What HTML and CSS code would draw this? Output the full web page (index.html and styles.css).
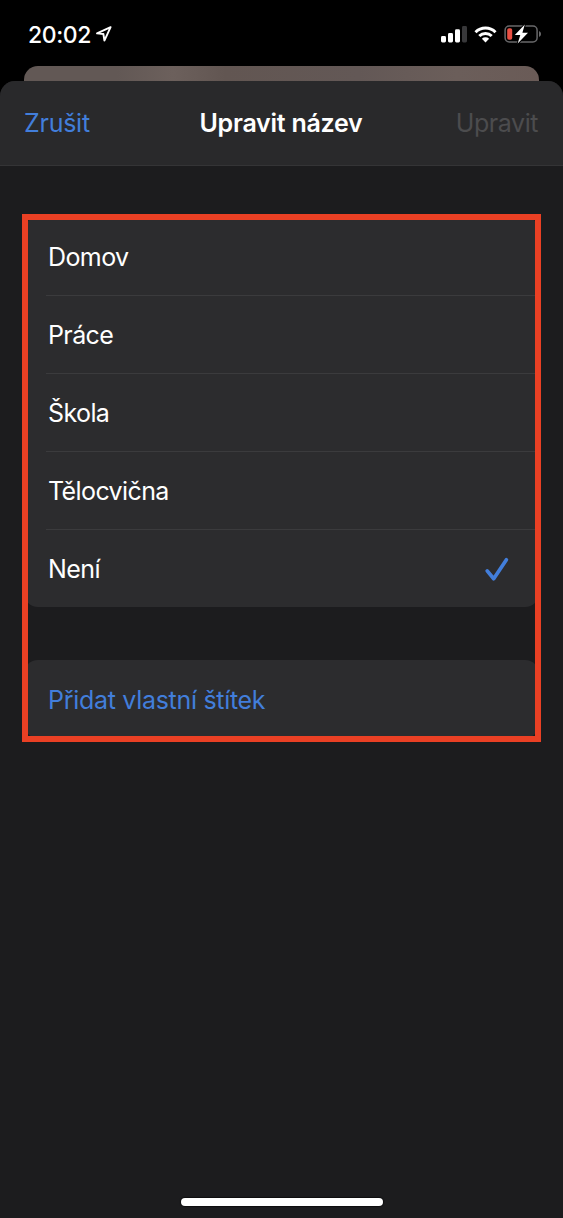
FILE: index.html
```html
<!DOCTYPE html>
<html lang="cs">
<head>
<meta charset="utf-8">
<title>Upravit název</title>
<link rel="stylesheet" href="styles.css">
</head>
<body>
<div class="phone">
  <header class="status">
    <div class="clock">
      <span class="time">20:02</span>
      <svg class="location" width="18" height="18" viewBox="0 0 18 18"><path d="M15.6 2.2 2 8.4 8.4 9 9.4 15.6Z"/></svg>
    </div>
    <div class="indicators">
      <svg class="signal" width="26" height="17" viewBox="0 0 26 17"><rect x="0" y="10" width="5" height="6.5" rx="1.4"/><rect x="7" y="7" width="5" height="9.5" rx="1.4"/><rect x="14" y="3.2" width="5" height="13.3" rx="1.4"/><rect class="off" x="21" y="0" width="5" height="16.5" rx="1.4"/></svg>
      <svg class="wifi" width="23" height="17" viewBox="0 0 23 17"><path class="arc" d="M1.5 6.2a14.2 14.2 0 0 1 20 0M5.3 10a8.8 8.8 0 0 1 12.4 0"/><path class="dot" d="M7.9 12.8a5.2 5.2 0 0 1 7.2 0L11.5 16.5Z"/></svg>
      <svg class="battery" width="38" height="20" viewBox="0 0 38 20"><rect class="shell" x="1.1" y="2.1" width="32" height="15.8" rx="4.2"/><path class="cap" d="M35 7a3.2 3.2 0 0 1 0 6Z"/><rect class="charge" x="3.2" y="4.2" width="5" height="11.6" rx="1.8"/><path class="bolt" d="M20.8.6 10.8 11h5.5l-2.6 8.5L24 8.8h-5.6Z"/></svg>
    </div>
  </header>
  <div class="backdrop"></div>
  <section class="sheet">
    <nav class="navbar">
      <span class="cancel">Zrušit</span>
      <h1 class="title">Upravit název</h1>
      <span class="submit">Upravit</span>
    </nav>
    <main class="content">
      <ul class="group">
        <li class="row"><span>Domov</span></li>
        <li class="row"><span>Práce</span></li>
        <li class="row"><span>Škola</span></li>
        <li class="row"><span>Tělocvična</span></li>
        <li class="row"><span>Není</span><svg class="check" width="26" height="26" viewBox="0 0 26 26"><path d="M3.2 14.9 9.7 22.7 22.4 3.7"/></svg></li>
      </ul>
      <ul class="group">
        <li class="row add"><span>Přidat vlastní štítek</span></li>
      </ul>
      <div class="highlight"></div>
    </main>
    <div class="home"></div>
  </section>
</div>
</body>
</html>
```
FILE: styles.css
```css
* { box-sizing: border-box; }
body { margin: 0; background: #000; }
.phone {
  width: 563px; height: 1218px; overflow: hidden;
  display: flex; flex-direction: column;
  background: #000; color: #fff;
  font: 400 25px/30px Inter, "Liberation Sans", sans-serif;
  letter-spacing: -.25px;
}
.status {
  height: 66px; padding: 0 21px 0 28px;
  display: flex; justify-content: space-between; align-items: flex-start;
}
.clock { display: flex; align-items: center; gap: 4px; padding-top: 20px; }
.time { font-weight: 550; font-size: 23px; letter-spacing: -.4px; }
.location { margin-bottom: 2px; }
.location path { fill: none; stroke: #fff; stroke-width: 1.9; stroke-linejoin: round; }
.indicators { display: flex; align-items: center; padding-top: 24px; }
.signal { fill: #fff; margin-right: 7px; }
.off { fill: #38383a; }
.wifi { margin-right: 7px; }
.arc { fill: none; stroke: #fff; stroke-width: 3; }
.dot { fill: #fff; }
.shell { fill: none; stroke: #68686a; stroke-width: 1.5; }
.cap { fill: #68686a; }
.charge { fill: #e94f43; }
.bolt { fill: #fff; stroke: #000; stroke-width: 2; paint-order: stroke; }
.backdrop {
  height: 30px; margin: 0 24px -15px; border-radius: 14px 14px 0 0;
  background: linear-gradient(90deg, #625855, #625855 18%, #6c605c 29%, #625652 39%, #635856 65%, #6b5e5a 84%, #6a5b57);
}
.sheet {
  flex: 1; display: flex; flex-direction: column;
  position: relative;
  background: #1c1c1e; border-radius: 15px 15px 0 0; overflow: hidden;
}
.navbar {
  height: 85px; padding: 0 25px 0 24px; border-bottom: 1px solid #343436;
  display: grid; grid-template-columns: 1fr auto 1fr; align-items: center;
  background: #29292b;
}
.cancel { color: #427edb; }
.title { margin: 0; font-size: 25px; font-weight: 600; }
.submit { justify-self: end; color: #4c4c4e; letter-spacing: -.45px; }
.content {
  position: relative; padding: 51px 24px 0;
  display: flex; flex-direction: column; gap: 53px;
}
.group { margin: 0; padding: 0; list-style: none; background: #2c2c2e; border-radius: 14px; }
.row {
  height: 78px; margin-left: 22px; padding: 2px 29px 0 2px;
  display: flex; align-items: center; justify-content: space-between;
  letter-spacing: -.6px;
}
.row + .row { padding-top: 0; border-top: 1px solid #3b3b3d; }
.add { color: #427edb; letter-spacing: -.3px; }
.check path { fill: none; stroke: #427edb; stroke-width: 3.7; stroke-linecap: round; stroke-linejoin: round; }
.highlight { position: absolute; left: 22px; right: 22px; top: 48px; height: 528px; border: 6px solid #ea4024; }
.home { width: 202px; height: 8px; margin: auto auto 12px; border-radius: 4px; background: #fff; box-shadow: 0 0 1px 1px #0008; }
```
